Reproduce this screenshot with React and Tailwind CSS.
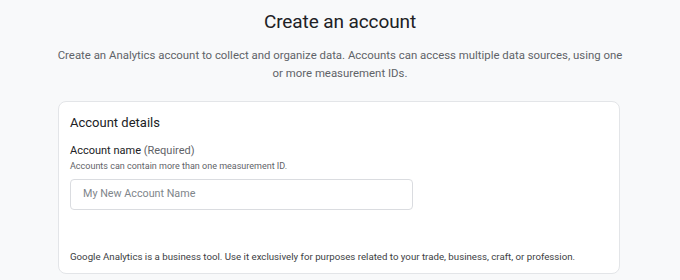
import React from "react";

const App = () => {
  return (
    <div className="min-h-[280px] w-[680px] bg-[#f8f9fa] font-['Roboto',sans-serif] text-[#202124]">
      <div className="pt-[9px] text-center">
        <h1 className="text-[19px] leading-[26px] font-normal tracking-[-0.1px] text-[#202124]">
          Create an account
        </h1>
        <p className="mx-auto mt-[11px] w-[568px] text-[11.4px] leading-[18px] text-[#5f6368]">
          Create an Analytics account to collect and organize data. Accounts can
          access multiple data sources, using one or more measurement IDs.
        </p>
      </div>

      {/* Account details card */}
      <div className="ml-[58px] mt-[19px] w-[562px] rounded-lg border border-[#e3e5e8] bg-white px-[11px] pt-[11px] pb-[9px]">
        <h2 className="text-[13px] leading-[19px] text-[#202124]">
          Account details
        </h2>
        <div className="mt-[11px]">
          <div className="text-[11px] leading-[15px] text-[#202124]">
            Account name <span className="text-[#5f6368]">(Required)</span>
          </div>
          <div className="mt-[2px] text-[9px] leading-[12px] text-[#5f6368]">
            Accounts can contain more than one measurement ID.
          </div>
          <div className="mt-[7px] flex h-[31px] w-[343px] items-center rounded border border-[#dadce0] px-[12px] text-[10.75px] text-[#80868b]">
            My New Account Name
          </div>
        </div>
        <p className="mt-[40px] text-[9.7px] leading-[14px] text-[#3c4043]">
          Google Analytics is a business tool. Use it exclusively for purposes
          related to your trade, business, craft, or profession.
        </p>
      </div>
    </div>
  );
};

export default App;
